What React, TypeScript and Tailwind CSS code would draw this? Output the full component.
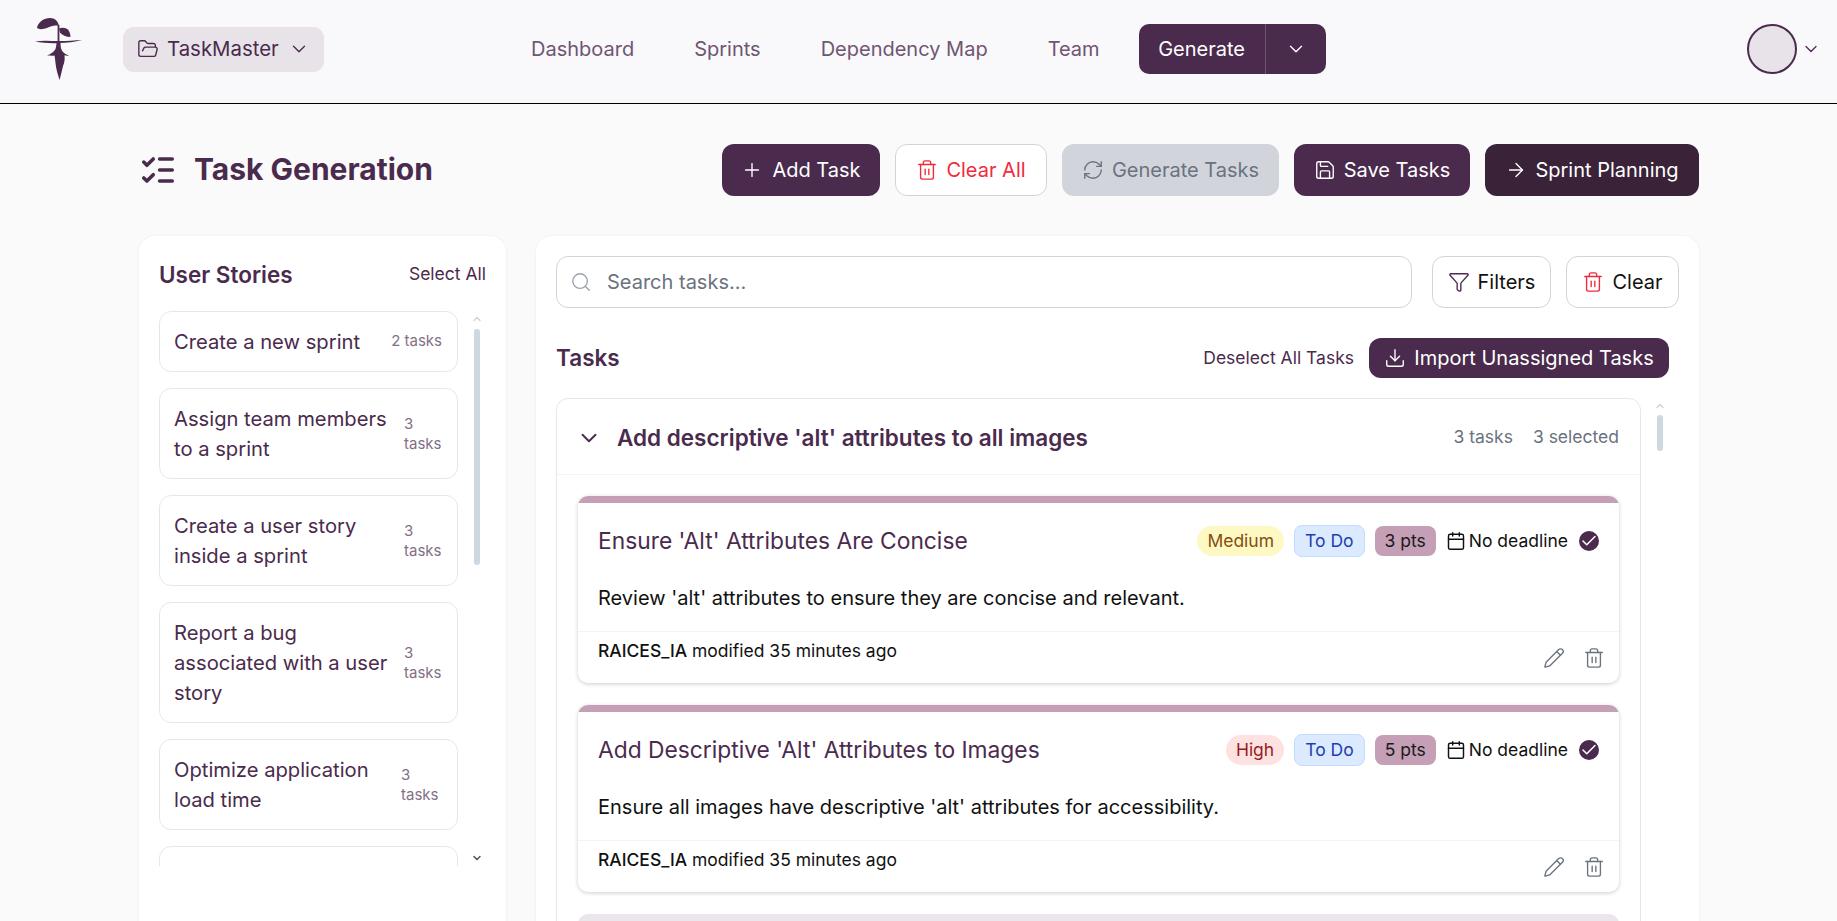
import {
  ArrowRight,
  Calendar,
  Check,
  ChevronDown,
  ChevronUp,
  Download,
  Filter,
  FolderOpen,
  ListChecks,
  Pencil,
  Plus,
  RefreshCw,
  Save,
  Search,
  Trash2,
} from "lucide-react";

const stories = [
  { title: "Create a new sprint", count: "2 tasks", wide: true },
  { title: "Assign team members to a sprint", count: "3 tasks" },
  { title: "Create a user story inside a sprint", count: "3 tasks" },
  { title: "Report a bug associated with a user story", count: "3 tasks" },
  { title: "Optimize application load time", count: "3 tasks", shift: true },
];

const tasks = [
  {
    title: "Ensure 'Alt' Attributes Are Concise",
    desc: "Review 'alt' attributes to ensure they are concise and relevant.",
    priority: "Medium",
    priorityClass: "bg-[#fef9c3] text-[#854d0e]",
    pts: "3 pts",
  },
  {
    title: "Add Descriptive 'Alt' Attributes to Images",
    desc: "Ensure all images have descriptive 'alt' attributes for accessibility.",
    priority: "High",
    priorityClass: "bg-[#fee2e2] text-[#991b1b]",
    pts: "5 pts",
  },
];

function Logo() {
  return (
    <svg viewBox="0 0 47 64" className="h-[64px] w-[47px] shrink-0 text-[#4a2b4d]" fill="currentColor">
      <path d="M2 11C3 5 9 1 15 1C20 1 23 4 24 9C20 8 16 9 12 11C8 12.500 4 12.500 2 11Z" />
      <path d="M24 11.500C28 10 32 11 34 14C35 16 35.500 18 35.500 20C31 20 27 18 25 15.500Z" />
      <path d="M22.600 8H24.400V25H22.600Z" />
      <path d="M0 24.500C8 23 16 24 24 24C32 24 40 23.500 47 23C40 25 32 26 24 26C16 26.500 8 26 0 24.500Z" />
      <path d="M21.500 26H25.500C25.500 30 26 33 28 35C30 37 32 38 34 38.500C32 39 31 38.700 29.500 38.300C30 42 29.500 46 28 49C27 53 26 58 24.500 63C23 58 21 52 20.500 46C20 43 20 40 19.500 38.500C17 39 15 38.500 12 38.500C16 37 19 35 20.500 32C21 30 21.500 28 21.500 26Z" />
    </svg>
  );
}

function HeaderBar() {
  return (
    <header className="flex h-[104px] shrink-0 items-center border-b border-black bg-[#f9f8fb] pb-[5px] pl-[35px] pr-[16px]">
      <Logo />
      <button className="ml-[41px] flex h-[45px] w-[201px] items-center gap-[8px] rounded-[11px] bg-[#e8e3e9] pl-[14px] text-[20.400px] text-[#4a2b4d]">
        <FolderOpen className="h-[22px] w-[22px]" strokeWidth={1.5} />
        TaskMaster
        <ChevronDown className="ml-[1px] h-[22px] w-[22px]" strokeWidth={1.5} />
      </button>
      <nav className="ml-[207px] flex items-center gap-[60px] text-[20px] text-[#6f5671]">
        <span>Dashboard</span>
        <span>Sprints</span>
        <span>Dependency Map</span>
        <span>Team</span>
      </nav>
      <div className="ml-[39px] flex h-[50px] w-[187px] items-center overflow-hidden rounded-[10px] bg-[#4a2b4d] text-[20px] text-white">
        <span className="flex h-full w-[127px] items-center justify-center border-r border-[#6f5671]">Generate</span>
        <span className="flex flex-1 items-center justify-center">
          <ChevronDown className="h-[22px] w-[22px]" strokeWidth={1.5} />
        </span>
      </div>
      <div className="ml-auto flex items-center gap-[4px]">
        <div className="h-[50px] w-[50px] rounded-full border-2 border-[#4a2b4d] bg-[#e8e3e9]" />
        <ChevronDown className="h-[20px] w-[20px] text-[#4a2b4d]" strokeWidth={1.5} />
      </div>
    </header>
  );
}

function TitleRow() {
  return (
    <div className="flex h-[52px] items-center justify-between">
      <div className="flex items-center gap-[17px] text-[#4a2b4d]">
        <ListChecks className="h-[38px] w-[38px]" strokeWidth={2.25} />
        <h1 className="pb-[2px] text-[30px] font-bold">Task Generation</h1>
      </div>
      <div className="flex items-center gap-[15px] text-[20px]">
        <button className="flex h-[52px] w-[158px] items-center justify-center gap-[9px] rounded-[12px] bg-[#4a2b4d] text-white">
          <Plus className="h-[22px] w-[22px]" strokeWidth={1.5} />
          Add Task
        </button>
        <button className="flex h-[52px] w-[152px] items-center justify-center gap-[8px] rounded-[12px] border border-[#d1d5db] bg-white text-[#ef2b3c]">
          <Trash2 className="h-[22px] w-[22px]" strokeWidth={1.5} />
          Clear All
        </button>
        <button className="flex h-[52px] w-[217px] items-center justify-center gap-[8px] rounded-[12px] bg-[#d1d5db] text-[#6b7280]">
          <RefreshCw className="h-[22px] w-[22px]" strokeWidth={1.5} />
          Generate Tasks
        </button>
        <button className="flex h-[52px] w-[176px] items-center justify-center gap-[8px] rounded-[12px] bg-[#4a2b4d] text-white">
          <Save className="h-[22px] w-[22px]" strokeWidth={1.5} />
          Save Tasks
        </button>
        <button className="flex h-[52px] w-[214px] items-center justify-center gap-[8px] rounded-[12px] bg-[#3a2238] text-white">
          <ArrowRight className="h-[22px] w-[22px]" strokeWidth={1.5} />
          Sprint Planning
        </button>
      </div>
    </div>
  );
}

function StoriesPanel() {
  return (
    <aside className="w-[367px] shrink-0 rounded-t-[16px] bg-white pl-[20px] pr-[20px] pt-[20px] shadow-[0_0_3px_rgba(0,0,0,0.06)]">
      <div className="flex h-[36px] items-center justify-between pt-[1px]">
        <h2 className="text-[22.500px] font-semibold text-[#4a2b4d]">User Stories</h2>
        <span className="text-[17.500px] text-[#4a2b4d]">Select All</span>
      </div>
      <div className="mt-[19px] flex h-[555px]">
        <div className="flex w-[299px] flex-col gap-[16px] overflow-hidden">
          {stories.map((s) => (
            <div
              key={s.title}
              className="flex shrink-0 items-center justify-between rounded-[12px] border border-[#e5e7eb] py-[14.500px] pl-[15px] pr-[15px]"
            >
              <span className="-ml-[1px] w-[216px] text-[20.200px] leading-[30px] text-[#4a2b4d]">{s.title}</span>
              <span
                className={
                  s.wide
                    ? "-ml-[80px] whitespace-nowrap text-[15px] text-[#836f85]"
                    : s.shift
                      ? "mr-[3px] w-[38px] text-[15px] leading-[20px] text-[#836f85]"
                      : "w-[38px] text-[15px] leading-[20px] text-[#836f85]"
                }
              >
                {s.count}
              </span>
            </div>
          ))}
          <div className="h-[60px] shrink-0 rounded-[12px] border border-[#e5e7eb]" />
        </div>
        <div className="ml-[15px] flex w-[8px] flex-col items-center">
          <ChevronUp className="mt-[2px] h-[12px] w-[12px] text-[#cbd5e1]" strokeWidth={3} />
          <div className="mt-[4px] h-[236px] w-[6px] rounded-full bg-[#cfd8e0]" />
          <ChevronDown className="mt-auto mb-[2px] h-[12px] w-[12px] text-[#4b5563]" strokeWidth={3} />
        </div>
      </div>
    </aside>
  );
}

function Badge({ className, children }: { className: string; children: string }) {
  return <span className={`flex items-center text-[17.500px] ${className}`}>{children}</span>;
}

function TaskCard({ task }: { task: (typeof tasks)[number] }) {
  return (
    <div className="overflow-hidden rounded-[10px] bg-white shadow-[0_1px_4px_rgba(0,0,0,0.2)]">
      <div className="h-[7px] bg-[#c49fb6]" />
      <div className="flex h-[59px] items-center justify-between pl-[20px] pr-[20px] pt-[17px]">
        <h3 className="text-[22.800px] text-[#4a2b4d]">{task.title}</h3>
        <div className="flex items-center">
          <Badge className={`h-[30px] rounded-full px-[10px] ${task.priorityClass}`}>{task.priority}</Badge>
          <Badge className="ml-[10px] h-[32px] rounded-[8px] border border-[#bfdbfe] bg-[#dbeafe] px-[10px] text-[#1e40af]">To Do</Badge>
          <Badge className="ml-[10px] h-[30px] rounded-[8px] bg-[#c49fb6] px-[10px] text-[#1a1a1a]">{task.pts}</Badge>
          <Calendar className="ml-[10px] h-[20px] w-[20px] text-[#111]" strokeWidth={1.75} />
          <span className="ml-[3px] text-[17.500px] text-[#111]">No deadline</span>
          <span className="ml-[11px] flex h-[20px] w-[20px] items-center justify-center rounded-full bg-[#4a2b4d]">
            <Check className="h-[18px] w-[18px] text-white" strokeWidth={2} />
          </span>
        </div>
      </div>
      <p className="mt-[21px] pl-[20px] text-[20px] leading-[30px] text-[#111]">{task.desc}</p>
      <div className="mt-[18px] flex h-[52px] justify-between border-t border-[#f3f4f6] pl-[20px] pr-[14px]">
        <p className="pt-[6px] text-[17.500px] text-[#111]">
          <span className="font-medium">RAICES_IA</span> modified 35 minutes ago
        </p>
        <div className="flex items-center gap-[18px] text-[#6b7280]">
          <Pencil className="h-[22px] w-[22px]" strokeWidth={1.5} />
          <Trash2 className="h-[22px] w-[22px]" strokeWidth={1.5} />
        </div>
      </div>
    </div>
  );
}

function TasksPanel() {
  return (
    <section className="min-w-0 flex-1 rounded-t-[16px] bg-white pl-[20px] pr-[20px] pt-[20px] shadow-[0_0_3px_rgba(0,0,0,0.06)]">
      <div className="flex h-[52px] gap-[20px]">
        <div className="flex flex-1 items-center gap-[15px] rounded-[12px] border border-[#d1d5db] pl-[13px] text-[20px] text-[#6b7280]">
          <Search className="h-[22px] w-[22px] text-[#9ca3af]" strokeWidth={1.5} />
          Search tasks...
        </div>
        <button className="flex w-[119px] items-center justify-center gap-[8px] rounded-[12px] border border-[#d1d5db] text-[20px] text-[#111]">
          <Filter className="h-[22px] w-[22px] text-[#4a2b4d]" strokeWidth={1.5} />
          Filters
        </button>
        <button className="-ml-[5px] flex w-[113px] items-center justify-center gap-[8px] rounded-[12px] border border-[#d1d5db] text-[20px] text-[#111]">
          <Trash2 className="h-[22px] w-[22px] text-[#ef2b3c]" strokeWidth={1.5} />
          Clear
        </button>
      </div>
      <div className="mt-[30px] flex h-[40px] items-center pr-[10px]">
        <h2 className="text-[22.500px] font-semibold text-[#4a2b4d]">Tasks</h2>
        <span className="ml-auto text-[17.500px] text-[#4a2b4d]">Deselect All Tasks</span>
        <button className="ml-[15px] flex h-[40px] w-[300px] items-center justify-center gap-[8px] rounded-[12px] bg-[#4a2b4d] text-[20px] text-white">
          <Download className="h-[22px] w-[22px]" strokeWidth={1.5} />
          Import Unassigned Tasks
        </button>
      </div>
      <div className="mt-[20px] flex">
        <div className="w-[1085px] shrink-0 rounded-t-[12px] border border-[#e5e7eb]">
          <div className="flex h-[76px] items-center border-b border-[#f3f4f6] pl-[19px] pr-[21px] pt-[2px]">
            <ChevronDown className="h-[26px] w-[26px] text-[#4a2b4d]" strokeWidth={1.75} />
            <h3 className="ml-[15px] text-[22.500px] font-semibold text-[#4a2b4d]">Add descriptive 'alt' attributes to all images</h3>
            <span className="ml-auto text-[17.500px] text-[#6b7280]">3 tasks</span>
            <span className="ml-[20px] text-[17.500px] text-[#6b7280]">3 selected</span>
          </div>
          <div className="flex flex-col gap-[22px] px-[21px] pt-[21px]">
            {tasks.map((t) => (
              <TaskCard key={t.title} task={t} />
            ))}
            <div className="h-[40px] rounded-t-[10px] bg-[#ebe5ec]" />
          </div>
        </div>
        <div className="ml-[15px] flex w-[8px] flex-col items-center">
          <ChevronUp className="mt-[2px] h-[12px] w-[12px] text-[#cbd5e1]" strokeWidth={3} />
          <div className="mt-[3px] h-[36px] w-[6px] rounded-full bg-[#cfd8e0]" />
        </div>
      </div>
    </section>
  );
}

export default function App() {
  return (
    <div className="flex h-screen flex-col overflow-hidden bg-[#fafafb] font-['Inter',sans-serif]">
      <HeaderBar />
      <main className="flex flex-1 flex-col pl-[139px] pr-[138px] pt-[40px]">
        <TitleRow />
        <div className="mt-[40px] flex flex-1 gap-[30px]">
          <StoriesPanel />
          <TasksPanel />
        </div>
      </main>
    </div>
  );
}
